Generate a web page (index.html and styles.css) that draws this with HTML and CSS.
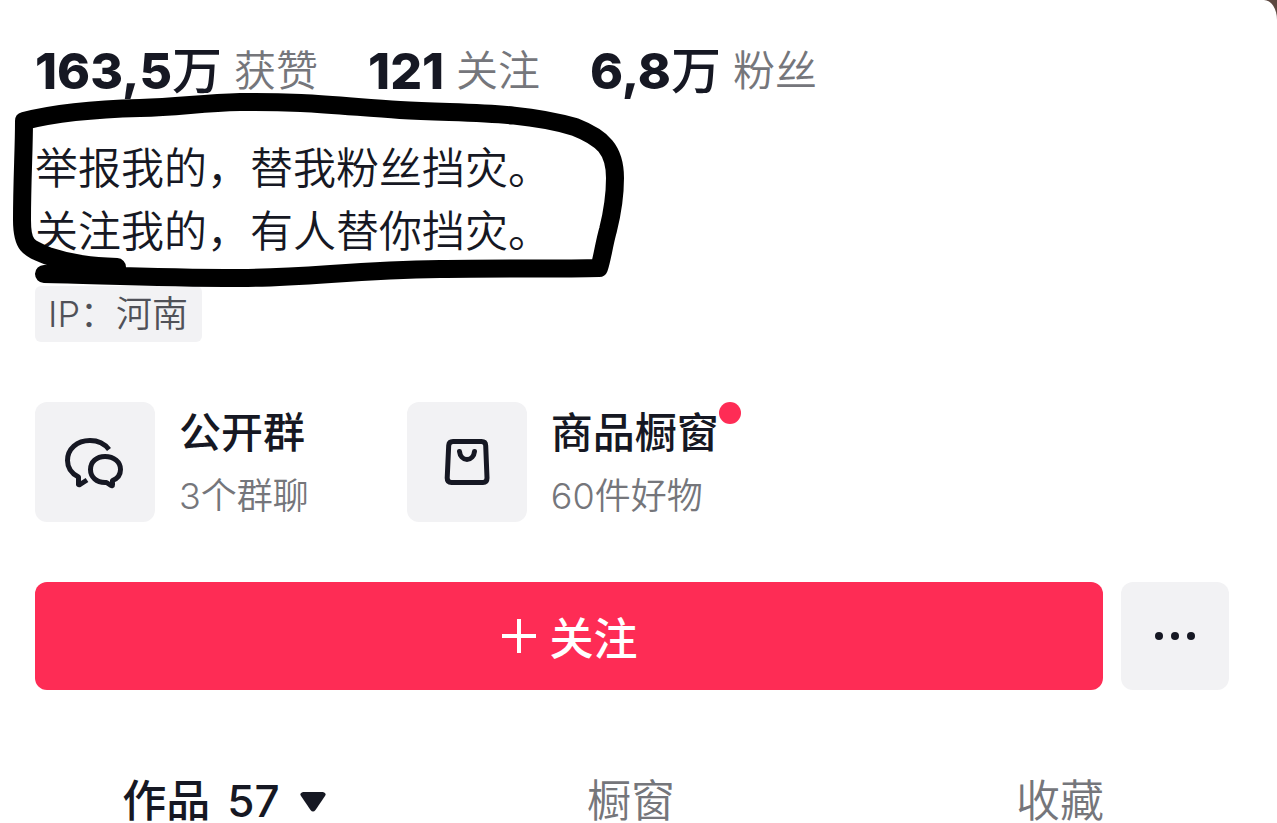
FILE: index.html
```html
<!DOCTYPE html>
<html lang="zh-CN">
<head>
    <meta charset="UTF-8">
    <meta name="viewport" content="width=device-width, initial-scale=1.0">
    <title>个人主页</title>
    <link rel="stylesheet" href="styles.css">
</head>
<body>
    <main class="profile">
        <div class="stats">
            <a href="#likes" class="stat"><span class="count">163,5<b>万</b></span><span class="label">获赞</span></a>
            <a href="#following" class="stat"><span class="count">121</span><span class="label">关注</span></a>
            <a href="#fans" class="stat"><span class="count">6,8<b>万</b></span><span class="label">粉丝</span></a>
        </div>

        <p class="bio">举报我的，替我粉丝挡灾。<br>关注我的，有人替你挡灾。</p>
        <span class="location">IP：河南</span>

        <div class="entries">
            <a href="#groups" class="entry">
                <span class="entry-icon">
                    <svg width="120" height="120" viewBox="0 0 120 120">
                        <path class="open" d="M74 47.500C69 41 62 38.500 55 38.500C42 38.500 32.500 47 32.500 58.500C32.500 66 36.500 71.500 43.500 75V82.500Q44 83 45 82.500L52 78"/>
                        <path d="M70 54.500C61.500 54.500 55.500 60 55.500 67.500C55.500 75 61.500 80.500 70 80.500H71.500L76 83.500Q77.500 84.500 77.500 82.500V78.500C82.500 76.500 85.500 72.500 85.500 67.500C85.500 60 79 54.500 70 54.500Z"/>
                    </svg>
                </span>
                <span class="entry-text">
                    <strong>公开群</strong>
                    <span class="entry-note">3个群聊</span>
                </span>
            </a>
            <a href="#shop" class="entry">
                <span class="entry-icon">
                    <svg width="120" height="120" viewBox="0 0 120 120">
                        <path d="M46 39.500H74.500Q78.500 39.500 78.700 43.500L80 76Q80 80.500 76 80.500H44.500Q40.200 80.500 40.200 76L41.700 43.500Q42 39.500 46 39.500Z"/>
                        <path d="M52.500 49.500C53 54 56 57.500 60 57.500S67 54 67.500 49.500"/>
                    </svg>
                </span>
                <span class="entry-text">
                    <strong class="has-dot">商品橱窗</strong>
                    <span class="entry-note">60件好物</span>
                </span>
            </a>
        </div>

        <div class="actions">
            <button type="button" class="follow">
                <svg width="36" height="36" viewBox="0 0 36 36"><path d="M18 1V35M1 18H35"/></svg>
                关注
            </button>
            <button type="button" class="more" aria-label="更多">
                <svg width="42" height="10" viewBox="0 0 42 10"><circle cx="5" cy="5" r="4"/><circle cx="21" cy="5" r="4"/><circle cx="37" cy="5" r="4"/></svg>
            </button>
        </div>

        <nav class="tabs">
            <a href="#works" class="tab active">作品 <span class="tab-count">57</span>
                <svg width="26" height="20" viewBox="0 0 26 20"><path d="M3 0H23Q27 1 25 4L15.500 18Q13 21 10.500 18L1 4Q-1 1 3 0Z"/></svg>
            </a>
            <a href="#showcase" class="tab">橱窗</a>
            <a href="#favorites" class="tab">收藏</a>
        </nav>

        <!-- hand-drawn marker around the bio -->
        <svg class="marker" width="640" height="300" viewBox="0 0 640 300">
            <path d="M44 274C100 275 150 278 240 278C310 278 350 270 440 269C500 268 560 269 599 268C602 260 604 244 608 230C612 214 615 196 615 178C615 150 603 138 575 127C520 111 470 114 400 110C340 106 300 101 240 102C200 103 180 107 140 108C100 109 55 113 24 121C24 150 22 180 22 220C22 246 28 248 48 256C72 264 92 266 117 267"/>
        </svg>
    </main>
</body>
</html>
```

FILE: styles.css
```css
* {
    box-sizing: border-box;
}
body {
    margin: 0;
    background: #5b4740;
    color: #161823;
    font-family: Inter, "Noto Sans CJK SC", sans-serif;
}
a {
    color: inherit;
    text-decoration: none;
}
svg {
    display: block;
    flex: none;
}
.profile {
    position: relative;
    min-height: 100vh;
    padding: 39px 48px 0 35px;
    background: #fff;
    border-top-right-radius: 13px 20px;
}
.stats {
    display: flex;
    gap: 50px;
    height: 64px;
}
.stat {
    display: flex;
    align-items: center;
    gap: 12px;
    line-height: 64px;
    white-space: nowrap;
}
.count {
    font-size: 50px;
    font-weight: 800;
}
.count b {
    font-weight: 500;
}
.label {
    color: #75767b;
    font-size: 42px;
    font-weight: 350;
}
.bio {
    margin: 31px 0 26px;
    font-family: "Noto Sans CJK SC", sans-serif;
    font-size: 43px;
    font-weight: 350;
    line-height: 63px;
}
.location {
    display: block;
    width: fit-content;
    padding: 0 14px 0 13px;
    background: #f2f2f4;
    border-radius: 6px;
    color: #505158;
    font-size: 36px;
    font-weight: 350;
    line-height: 56px;
}
.entries {
    display: flex;
    gap: 98px;
    margin-top: 60px;
}
.entry {
    display: flex;
    gap: 24px;
}
.entry-icon {
    background: #f2f2f4;
    border-radius: 12px;
}
.entry-icon path {
    fill: none;
    stroke: #161823;
    stroke-width: 5;
    stroke-linecap: round;
    stroke-linejoin: round;
}
.entry-icon .open {
    stroke-linecap: butt;
}
.entry-text {
    display: flex;
    flex-direction: column;
    gap: 6px;
}
.entry strong {
    font-size: 42px;
    font-weight: 500;
    line-height: 62px;
}
.has-dot {
    position: relative;
}
.has-dot::after {
    content: "";
    position: absolute;
    top: 0;
    left: 100%;
    width: 22px;
    height: 22px;
    background: #fe2c55;
    border-radius: 50%;
}
.entry-note {
    color: #75767b;
    font-size: 36px;
    font-weight: 350;
    line-height: 52px;
}
.actions {
    display: flex;
    gap: 18px;
    margin-top: 60px;
}
button {
    display: flex;
    align-items: center;
    justify-content: center;
    height: 108px;
    padding: 0;
    border: none;
    border-radius: 12px;
    font-family: inherit;
    cursor: pointer;
}
.follow {
    flex: 1;
    gap: 13px;
    background: #fe2c55;
    color: #fff;
    font-size: 44px;
    font-weight: 500;
}
.follow path {
    stroke: #fff;
    stroke-width: 4;
}
.more {
    width: 108px;
    background: #f2f2f4;
}
.more circle {
    fill: #161823;
}
.tabs {
    display: grid;
    grid-template-columns: 378fr 436fr 422fr;
    margin: 90px -42px 0 0;
}
.tab {
    display: flex;
    align-items: center;
    justify-content: center;
    color: #75767b;
    font-size: 44px;
    font-weight: 350;
    line-height: 43px;
}
.tab.active {
    color: #161823;
    font-weight: 500;
}
.tab-count {
    margin: 0 20px 0 17px;
}
.tab svg {
    fill: #161823;
}
.marker {
    position: absolute;
    top: 0;
    left: 0;
    pointer-events: none;
}
.marker path {
    fill: none;
    stroke: #000;
    stroke-width: 18;
    stroke-linecap: round;
    stroke-linejoin: round;
}
```
